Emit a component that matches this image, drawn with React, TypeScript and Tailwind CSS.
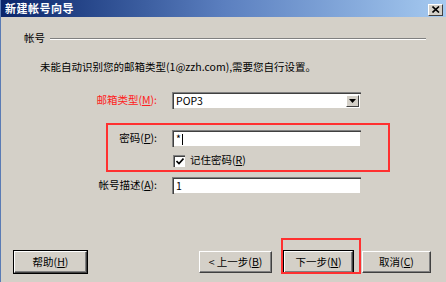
import React from "react";

const font = { fontFamily: '"Noto Sans CJK SC", "Liberation Sans", sans-serif' };

function Sunken({ className, children }: { className?: string; children?: React.ReactNode }) {
  return (
    <div
      className={
        "h-[17px] bg-white border-t border-l border-[#808080] border-b-white border-r-white shadow-[inset_1px_1px_#404040,inset_-1px_-1px_#d4d0c8] flex items-center pl-[3px] text-[10.5px] leading-none " +
        (className ?? "")
      }
    >
      {children}
    </div>
  );
}

function Btn({ children, className }: { children: React.ReactNode; className?: string }) {
  return (
    <div
      className={
        "h-[22px] flex items-center justify-center text-[10.5px] leading-none bg-[#d4d0c8] border border-t-white border-l-white border-b-[#404040] border-r-[#404040] shadow-[inset_-1px_-1px_#808080] " +
        (className ?? "")
      }
    >
      {children}
    </div>
  );
}

export default function App() {
  return (
    <div className="relative w-[446px] h-[282px] bg-[#d4d0c8] border-l border-[#5a7bb5] flex flex-col text-black" style={font}>
      {/* title bar */}
      <div className="h-[17px] flex items-center justify-between bg-gradient-to-r from-[#0a246a] via-[#5b7fbf] to-[#a6caf0] pl-[4px] pr-[3px]">
        <span className="text-white font-bold text-[11px] leading-none tracking-[0.5px]">新建帐号向导</span>
        <div className="w-[15px] h-[12px] mt-[2px] bg-[#d4d0c8] border border-t-white border-l-white border-b-[#404040] border-r-[#404040] flex items-center justify-center">
          <svg width="8" height="7" viewBox="0 0 8 7">
            <path d="M0.5 0.5 L7 6.5 M7 0.5 L0.5 6.5" stroke="#000" strokeWidth="1.6" />
          </svg>
        </div>
      </div>

      {/* group header */}
      <div className="mt-[14px] ml-[23px] mr-[20px] flex items-center gap-[5px] h-[14px]">
        <span className="text-[10.5px] leading-none">帐号</span>
        <div className="flex-1 h-[2px] border-t border-[#808080] border-b border-b-white mt-[2px]" />
      </div>

      {/* description */}
      <div className="mt-[15px] ml-[39px] text-[10.5px] leading-none h-[14px] flex items-center">
        未能自动识别您的邮箱类型(1@zzh.com),需要您自行设置。
      </div>

      {/* form */}
      <div className="mt-[18px] flex flex-col">
        <div className="flex items-center h-[17px]">
          <span className="w-[160px] text-right pr-[4px] text-[10.5px] leading-none text-[#ff2020]">邮箱类型(<u>M</u>):</span>
          <div className="ml-[11px] w-[189px] h-[17px] bg-white border-t border-l border-[#808080] border-b-white border-r-white shadow-[inset_1px_1px_#404040,inset_-1px_-1px_#d4d0c8] flex items-center justify-between pl-[3px] pr-[2px]">
            <span className="text-[10.5px] leading-none">POP3</span>
            <div className="w-[13px] h-[12px] bg-[#d4d0c8] border border-t-white border-l-white border-b-[#404040] border-r-[#404040] flex items-center justify-center">
              <svg width="7" height="4" viewBox="0 0 7 4">
                <path d="M0 0 H7 L3.5 4 Z" fill="#000" />
              </svg>
            </div>
          </div>
        </div>

        <div className="mt-[21px] flex items-center h-[17px]">
          <span className="w-[160px] text-right pr-[4px] text-[10.5px] leading-none">密码(<u>P</u>):</span>
          <Sunken className="ml-[11px] w-[189px]">
            <span>*</span>
            <span className="w-px h-[11px] bg-black ml-px" />
          </Sunken>
        </div>

        <div className="mt-[7px] ml-[172px] flex items-center h-[13px] gap-[5px]">
          <div className="w-[12px] h-[12px] bg-white border-t border-l border-[#808080] border-b-white border-r-white shadow-[inset_1px_1px_#404040] flex items-center justify-center">
            <svg width="8" height="7" viewBox="0 0 8 7">
              <path d="M0.5 3 L3 5.5 L7.5 0.5" stroke="#000" strokeWidth="1.6" fill="none" />
            </svg>
          </div>
          <span className="text-[10.5px] leading-none">记住密码(<u>R</u>)</span>
        </div>

        <div className="mt-[10px] flex items-center h-[17px]">
          <span className="w-[160px] text-right pr-[4px] text-[10.5px] leading-none">帐号描述(<u>A</u>):</span>
          <Sunken className="ml-[11px] w-[189px]">1</Sunken>
        </div>
      </div>

      {/* buttons */}
      <div className="mt-auto mb-[9px] flex items-center pl-[13px] pr-[15px]">
        <Btn className="w-[73px] outline outline-1 outline-black">帮助(<u>H</u>)</Btn>
        <div className="flex-1" />
        <Btn className="w-[73px]">&lt; 上一步(<u>B</u>)</Btn>
        <Btn className="w-[69px] ml-[12px] outline outline-1 outline-black">下一步(<u>N</u>)</Btn>
        <Btn className="w-[69px] ml-[9px]">取消(<u>C</u>)</Btn>
      </div>

      {/* annotations */}
      <div className="absolute left-[105px] top-[123px] w-[284px] h-[49px] border-2 border-[#ff3030] pointer-events-none" />
      <div className="absolute left-[280px] top-[238px] w-[80px] h-[36px] border-2 border-[#ff3030] pointer-events-none" />
    </div>
  );
}
